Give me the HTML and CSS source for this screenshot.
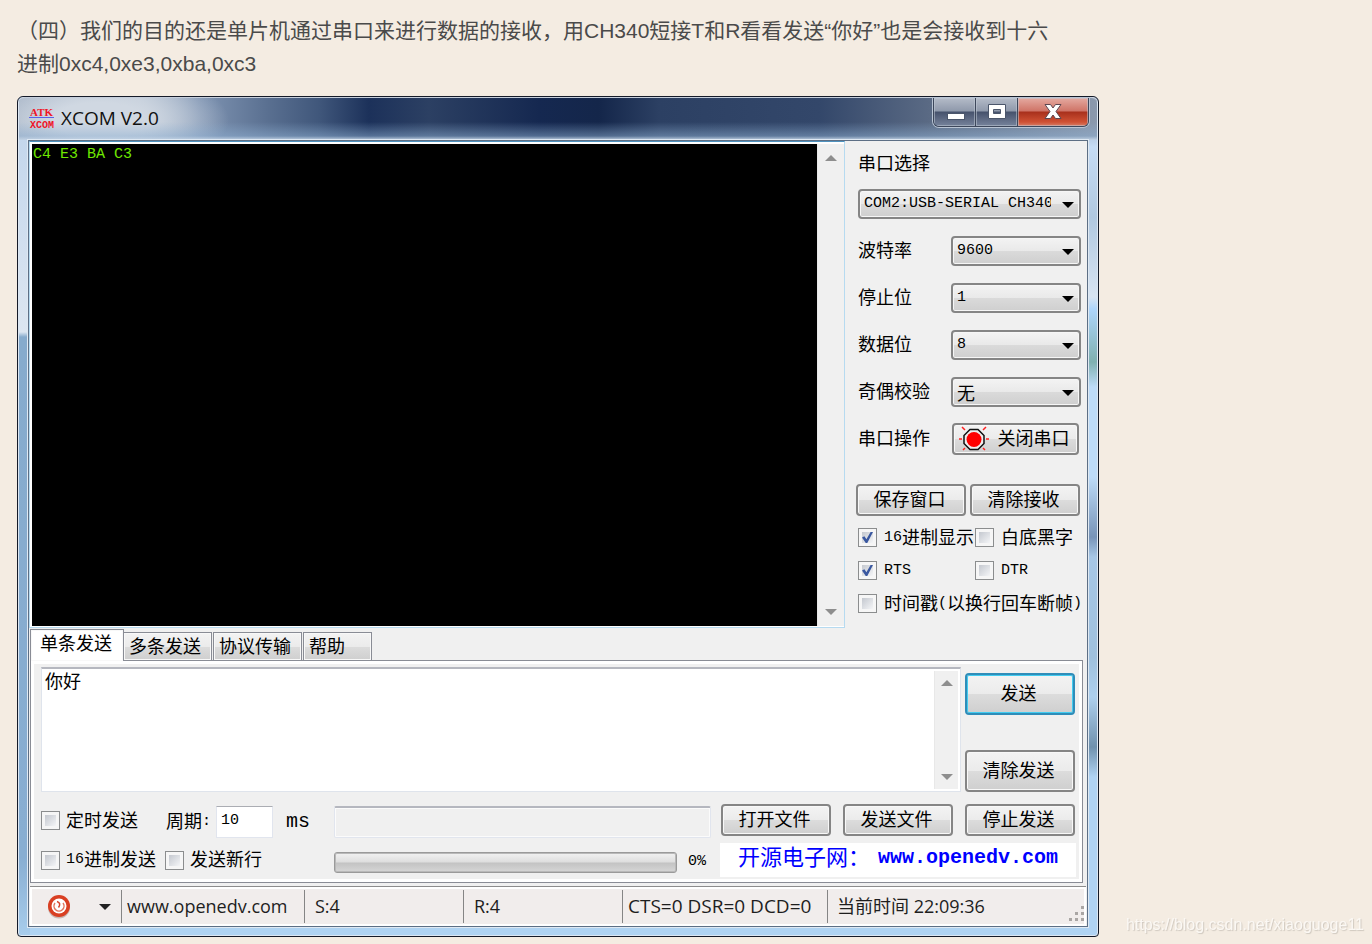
FILE: index.html
```html
<!DOCTYPE html>
<html lang="zh-CN">
<head>
<meta charset="utf-8">
<title>XCOM V2.0</title>
<link rel="stylesheet" href="styles.css">
</head>
<body>
<main class="article">
<p class="intro">（四）我们的目的还是单片机通过串口来进行数据的接收，用CH340短接T和R看看发送“你好”也是会接收到十六进制0xc4,0xe3,0xba,0xc3</p>

<section class="window">
  <header class="titlebar">
    <svg class="app-icon" width="26" height="24" viewBox="0 0 26 24">
      <text x="1" y="10" class="icon-atk">ATK</text>
      <rect x="0" y="11" width="25" height="1" fill="#5a62e8"/>
      <text x="1" y="22" class="icon-xcom">XCOM</text>
    </svg>
    <h1 class="title">XCOM V2.0</h1>
    <div class="caption-buttons">
      <button class="cap" aria-label="最小化"><svg width="20" height="18"><rect x="2.500" y="10.500" width="17" height="6" fill="#fff" stroke="#4b566b"/></svg></button>
      <button class="cap" aria-label="最大化"><svg width="20" height="18"><path d="M1.500 1.500h17v14h-17zM6.500 6.500v4h7v-4z" fill="#fff" fill-rule="evenodd" stroke="#4b566b"/></svg></button>
      <button class="cap close" aria-label="关闭"><svg width="20" height="18"><path d="M2 1.500h5.500L10 5l2.500-3.500H18L13 8.500 18 15.500h-5.500L10 12l-2.500 3.500H2L7 8.500z" fill="#fff" stroke="#5c4650"/></svg></button>
    </div>
  </header>

  <div class="client">
    <div class="top">
      <div class="terminal">
        <textarea class="output" readonly aria-label="接收窗口">C4 E3 BA C3</textarea>
        <div class="scroll"><svg width="12" height="7"><path d="M0 7L6 1l6 6z" fill="#8e8e8e"/></svg><svg width="12" height="7"><path d="M0 0h12L6 6z" fill="#8e8e8e"/></svg></div>
      </div>
      <div class="side">
        <label class="side-label" for="port">串口选择</label>
        <span class="select wide"><select id="port"><option>COM2:USB-SERIAL CH340</option></select></span>
        <div class="field"><label for="baud">波特率</label><span class="select"><select id="baud"><option>9600</option></select></span></div>
        <div class="field"><label for="stop">停止位</label><span class="select"><select id="stop"><option>1</option></select></span></div>
        <div class="field"><label for="data">数据位</label><span class="select"><select id="data"><option>8</option></select></span></div>
        <div class="field"><label for="parity">奇偶校验</label><span class="select"><select id="parity" class="cjk"><option>无</option></select></span></div>
        <div class="field"><span>串口操作</span>
          <button class="btn port-btn"><svg width="30" height="26" viewBox="0 0 30 26"><path d="M11 3.500h8l6 6v8l-6 6h-8l-6-6v-8z" fill="#eee" stroke="#111" stroke-width="1.500"/><circle cx="15" cy="13.500" r="7.500" fill="#f00"/><path d="M0 13h3M27 13h3M3 1l3 3M27 1l-3 3M4 24l2-2M26 24l-2-2" stroke="#f22" stroke-width="1.500"/></svg>关闭串口</button></div>
        <div class="pair"><button class="btn">保存窗口</button><button class="btn">清除接收</button></div>
        <div class="checks">
          <label class="check"><input type="checkbox" checked><span class="mixed"><span class="mono">16</span><span>进制显示</span></span></label>
          <label class="check"><input type="checkbox"><span>白底黑字</span></label>
          <label class="check"><input type="checkbox" checked><span class="mono">RTS</span></label>
          <label class="check"><input type="checkbox"><span class="mono">DTR</span></label>
          <label class="check full"><input type="checkbox"><span class="mixed"><span>时间戳</span><span class="mono">(</span><span>以换行回车断帧</span><span class="mono">)</span></span></label>
        </div>
      </div>
    </div>

    <div class="tabs" role="tablist">
      <button class="tab active" role="tab" aria-selected="true">单条发送</button>
      <button class="tab" role="tab">多条发送</button>
      <button class="tab" role="tab">协议传输</button>
      <button class="tab last" role="tab">帮助</button>
    </div>

    <div class="panel">
      <div class="compose">
        <div class="message">
          <textarea class="input-text" aria-label="发送内容">你好</textarea>
          <div class="scroll"><svg width="12" height="7"><path d="M0 7L6 1l6 6z" fill="#8e8e8e"/></svg><svg width="12" height="7"><path d="M0 0h12L6 6z" fill="#8e8e8e"/></svg></div>
        </div>
        <div class="send-col"><button class="btn tall primary">发送</button><button class="btn tall">清除发送</button></div>
      </div>
      <div class="controls">
        <div class="options">
          <div class="option-row first">
            <label class="check"><input type="checkbox"><span>定时发送</span></label>
            <label class="period mixed" for="period"><span>周期</span><span class="mono">:</span></label>
            <input class="period-input" id="period" value="10">
            <span class="unit">ms</span>
          </div>
          <div class="option-row second">
            <label class="check"><input type="checkbox"><span class="mixed"><span class="mono">16</span><span>进制发送</span></span></label>
            <label class="check"><input type="checkbox"><span>发送新行</span></label>
          </div>
        </div>
        <div class="file">
          <input class="path" readonly aria-label="文件路径">
          <div class="progress-row"><div class="bar" role="progressbar" aria-valuenow="0" aria-label="进度"></div><span class="percent">0%</span></div>
        </div>
        <div class="actions">
          <div class="action-row"><button class="btn">打开文件</button><button class="btn">发送文件</button><button class="btn">停止发送</button></div>
          <a class="banner" href="#"><span>开源电子网：</span><span class="banner-url">www.openedv.com</span></a>
        </div>
      </div>
    </div>

    <footer class="status">
      <button class="menu" aria-label="菜单"><svg width="24" height="26" viewBox="0 0 24 26"><circle cx="12" cy="13.500" r="11" fill="#c9b8b4"/><circle cx="12" cy="12" r="11" fill="#d93f22"/><circle cx="12" cy="12" r="7.500" fill="#fff"/><path d="M8 9a5 5 0 1 0 8 0" fill="none" stroke="#e0765f" stroke-width="1.500"/><path d="M10 7.500c3 1 3.500 3 1.500 6" fill="none" stroke="#d5432a" stroke-width="1.500"/></svg><svg width="12" height="6"><path d="M0 0h12L6 6z" fill="#222"/></svg></button>
      <a class="cell site" href="#">www.openedv.com</a>
      <span class="cell count">S:4</span>
      <span class="cell count">R:4</span>
      <span class="cell lines">CTS=0 DSR=0 DCD=0</span>
      <span class="cell clock">当前时间 22:09:36</span>
      <svg class="grip" width="18" height="18"><path d="M13 1h3v3h-3zM7 7h3v3H7zM13 7h3v3h-3zM1 13h3v3H1zM7 13h3v3H7zM13 13h3v3h-3z" fill="#aaa6a4"/></svg>
    </footer>
  </div>
</section>
</main>
<a class="watermark" href="#">https://blog.csdn.net/xiaoguoge11</a>
</body>
</html>
```
FILE: styles.css
```css
* { box-sizing: border-box; }
body {
  margin: 0;
  background: #f4ece2;
  color: #000;
  font: 18px/24px "Liberation Sans", "Noto Sans CJK SC", sans-serif;
}
button, input, select, textarea { font: inherit; color: inherit; margin: 0; }
svg { display: block; flex: none; }
a { color: inherit; text-decoration: none; }
.mono { font-family: "Liberation Mono", monospace; font-size: 15px; }
.mixed { display: flex; align-items: center; }

.article { max-width: 1099px; padding: 14px 0 0 17px; }
.intro {
  max-width: 1040px;
  margin: 0 0 16px;
  color: #4a4a4a;
  font-size: 21px;
  line-height: 33px;
}

.window {
  border: 1px solid #141a28;
  border-radius: 6px 6px 4px 4px;
  padding: 0 10px 9px;
  box-shadow: inset 0 0 0 1px #dbe6f2;
  background:
    linear-gradient(#98abc4, #c4d7ec 40px, #dce6f1 235px, #86abcd 240px, #88aed2 760px, #a8cdec) left / 12px 100% no-repeat,
    linear-gradient(#7d8ba2, #c6dcf5 50px, #b0c8e0 120px, #d8e4f2 200px, #aed5fb 212px, #7fb0b0 265px, #bddbf8 290px, #bddbf8 380px, #7894b8 440px, #a7c7e6 460px, #9fc0dd 560px, #aed0ee 600px, #7091ad 650px, #b0d3f3 680px) right / 12px 100% no-repeat,
    linear-gradient(#afd3f2, #afd3f2);
}
.titlebar {
  display: flex;
  align-items: center;
  height: 43px;
  margin: 0 -9px;
  padding: 0 0 3px 10px;
  border-top: 1px solid #c5cedb;
  border-radius: 6px 6px 0 0;
  background:
    linear-gradient(transparent 24px, #8fb0d280 38px, #c2d2e4),
    radial-gradient(ellipse 130px 50px at 80px 22px, #d0d8e2 35%, transparent),
    linear-gradient(90deg, #9cabbf, #b9c5d4 120px, #8095b3 180px, #596f90 250px, #40577b 300px, #1c315a 350px, #2c4063 410px, #152850 520px, #14264a 580px, #2c4063 640px, #33476a 800px, #5a6a84 910px, #8b99ad);
}
.app-icon { margin-right: 6px; }
.icon-atk { font: bold 11px "Liberation Serif", serif; fill: #f01428; }
.icon-xcom { font: bold 10px "Liberation Mono", monospace; fill: #f01428; }
.title { flex: 1; margin: 0; font: 19px/24px "Open Sans", sans-serif; color: #111; }
.caption-buttons {
  display: flex;
  align-self: flex-start;
  margin-right: 8px;
  border: 1px solid #3d475b;
  border-top: 0;
  border-radius: 0 0 6px 6px;
  overflow: hidden;
  box-shadow: 0 0 0 1px #b9c4d3;
}
.cap {
  display: flex;
  align-items: center;
  justify-content: center;
  width: 42px;
  height: 28px;
  padding: 0;
  border: 0;
  border-right: 1px solid #3d475b;
  background: linear-gradient(#b4bbc8, #8f99ab 13px, #46526c 14px, #76839b);
  box-shadow: inset 0 0 0 1px #c2cad688;
}
.close { width: 70px; border: 0; background: linear-gradient(#e5aaa1, #cf7467 13px, #a8301c 14px, #cf5134 24px, #d77d66); }

.client { border: 1px solid #5d6f85; background: #f0f0f0; box-shadow: 0 0 0 1px #dfe9f3; }
.top { display: grid; grid-template-columns: minmax(0, 1fr) 242px; min-height: 487px; }
.terminal {
  display: flex;
  padding: 2px 0 1px 2px;
  border: 1px solid #b6daf0;
  border-top-color: #4f92be;
  background: #fff;
}
.output {
  flex: 1;
  min-width: 0;
  padding: 2px 1px;
  border: 0;
  resize: none;
  overflow: hidden;
  background: #000;
  color: #6fe800;
  font: 15px/18px "Liberation Mono", monospace;
}
.scroll {
  display: flex;
  flex-direction: column;
  align-items: center;
  justify-content: space-between;
  width: 27px;
  padding: 10px 0;
  border-left: 1px solid #e8e8e8;
  background: #f0f0f0;
}
.side { display: flex; flex-direction: column; padding: 8px 6px 0 13px; }
.side-label { margin-bottom: 10px; line-height: 30px; }
.select { position: relative; flex: none; width: 130px; height: 30px; }
.select.wide { width: auto; margin-bottom: 17px; }
.select::after {
  content: "";
  position: absolute;
  top: 13px;
  right: 7px;
  width: 12px;
  height: 6px;
  background: #000;
  clip-path: polygon(0 0, 100% 0, 50% 100%);
  pointer-events: none;
}
select {
  appearance: none;
  width: 100%;
  height: 30px;
  padding: 0 28px 0 4px;
  border: 2px solid #858585;
  border-radius: 4px;
  background: linear-gradient(#f3f3f3, #e9e9e9 50%, #dadada 51%, #cfcfcf);
  box-shadow: inset 0 0 0 1px #f6f6f6;
  font: 15px/24px "Liberation Mono", monospace;
}
select.cjk { font: 18px/24px "Noto Sans CJK SC", sans-serif; }
.field {
  display: flex;
  align-items: center;
  justify-content: space-between;
  height: 30px;
  margin-bottom: 17px;
}
.btn {
  display: flex;
  align-items: center;
  justify-content: center;
  width: 110px;
  height: 32px;
  padding: 0 3px 0 0;
  border: 2px solid #858585;
  border-radius: 4px;
  background: linear-gradient(#f3f3f3, #ebebeb 50%, #dcdcdc 51%, #cfcfcf);
  box-shadow: inset 0 0 0 1px #f8f8f8;
  white-space: nowrap;
}
.port-btn { gap: 9px; width: 127px; margin-right: 2px; }
.pair { display: flex; gap: 4px; margin: 13px 0 5px -2px; }
.checks { display: grid; grid-template-columns: 117px 1fr; grid-auto-rows: 33px; align-items: center; }
.check { display: flex; align-items: center; gap: 7px; white-space: nowrap; }
.full { grid-column: 1 / 3; }
.check input {
  appearance: none;
  flex: none;
  width: 19px;
  height: 19px;
  padding: 3px;
  border: 1px solid #8b8d8e;
  background: linear-gradient(135deg, #c4c8cf, #f4f5f7) content-box, #f6f6f6;
}
.check input:checked::before {
  content: "";
  display: block;
  width: 11px;
  height: 11px;
  background: #3a58a0;
  clip-path: polygon(0 50%, 22% 38%, 40% 66%, 78% 0, 100% 0, 48% 100%, 34% 100%);
}

.tabs { display: flex; align-items: flex-end; height: 32px; padding-left: 1px; }
.tab {
  width: 89px;
  height: 28px;
  margin: 0 0 0 1px;
  padding: 0 0 0 5px;
  border: 1px solid #898c95;
  border-bottom: 0;
  background: linear-gradient(#f3f3f3, #ebebeb 50%, #dcdcdc 51%, #cfcfcf);
  box-shadow: inset 0 0 0 1px #f8f8f8;
  text-align: left;
  white-space: nowrap;
}
.tab.active { width: 94px; height: 32px; margin: 0 -2px -1px 0; padding: 0 0 3px 9px; background: #fff; }
.tab.last { width: 69px; }
.panel {
  margin: 0 4px 3px 1px;
  padding: 4px 7px 2px 10px;
  border: 1px solid #898c95;
  box-shadow: inset 0 0 0 3px #fff;
}
.compose { display: flex; gap: 4px; }
.message {
  display: flex;
  flex: 1;
  min-width: 0;
  height: 125px;
  margin-top: 2px;
  padding: 2px;
  border: 1px solid #dfe4ec;
  border-top: 2px solid #b5b7bf;
  background: #fff;
}
.input-text { flex: 1; min-width: 0; padding: 0 1px; border: 0; resize: none; overflow: hidden; background: #fff; line-height: 22px; }
.message .scroll { width: 24px; padding: 8px 0; }
.send-col { display: flex; flex-direction: column; justify-content: space-between; padding-top: 8px; }
.tall { height: 42px; }
.primary { border-color: #2f8db9; box-shadow: inset 0 0 0 1px #42ccf0; }
.controls { display: flex; padding-top: 12px; }
.options { flex: none; width: 293px; }
.option-row { display: flex; align-items: center; height: 36px; }
.option-row .check { gap: 6px; }
.first .check { padding-bottom: 3px; }
.period { width: 50px; margin-left: 28px; white-space: nowrap; }
.period-input {
  width: 57px;
  height: 32px;
  padding: 0 4px 3px;
  border: 1px solid #e1e5ee;
  border-top-color: #abadb3;
  background: #fff;
  font: 15px/24px "Liberation Mono", monospace;
}
.unit { margin-left: 13px; font: 20px/24px "Liberation Mono", monospace; }
.second { gap: 9px; height: 40px; }
.file { flex: 1; min-width: 0; }
.path { display: block; width: 100%; height: 32px; margin-top: 2px; border: 1px solid #e1e5ee; border-top: 2px solid #b5b7bf; border-radius: 2px; background: #f0f0f0; box-shadow: inset 0 0 0 1px #fbfbfb; }
.progress-row { display: flex; align-items: center; justify-content: space-between; height: 24px; margin-top: 12px; }
.bar {
  flex: 1;
  height: 21px;
  border: 1px solid #9a9a9a;
  border-radius: 3px;
  background: linear-gradient(#f2f2f2, #dedede 9px, #c3c3c3 10px, #d6d6d6);
  box-shadow: inset 0 0 0 1px #b9b9b9;
}
.percent { width: 34px; padding-left: 11px; font: 15px/24px "Liberation Mono", monospace; }
.actions { flex: none; margin-left: 10px; }
.action-row { display: flex; gap: 12px; }
.banner {
  display: flex;
  align-items: center;
  justify-content: center;
  height: 34px;
  margin: 7px -1px 0;
  padding-bottom: 4px;
  background: #fff;
  color: #00f;
  font-size: 22px;
}
.banner-url { margin-left: 8px; font-family: "Liberation Mono", monospace; font-size: 20px; font-weight: bold; }

.status {
  display: flex;
  align-items: stretch;
  height: 40px;
  margin: 0 1px;
  padding: 3px 0;
  border-top: 1px solid #8c8c8c;
  background: #f1edec;
  box-shadow: inset 0 0 0 2px #fff;
  color: #1e1e1e;
  font: 18px/32px "Open Sans", "Noto Sans CJK SC", sans-serif;
  white-space: nowrap;
}
.menu { display: flex; align-items: center; gap: 28px; width: 91px; padding: 0 0 0 17px; border: 0; background: none; }
.cell { border-left: 1px solid #858585; padding-left: 5px; }
.site { width: 183px; }
.count { flex: 1; max-width: 159px; padding-left: 10px; }
.lines { width: 205px; font-size: 19px; }
.clock { flex: 1; padding-left: 9px; }
.grip { align-self: flex-end; }

.watermark {
  position: fixed;
  right: 8px;
  bottom: 7px;
  color: #fbf8f4;
  font: 16px/24px "Liberation Sans", sans-serif;
  text-shadow: 1px 1px 1px #cfc8bf;
}
```
